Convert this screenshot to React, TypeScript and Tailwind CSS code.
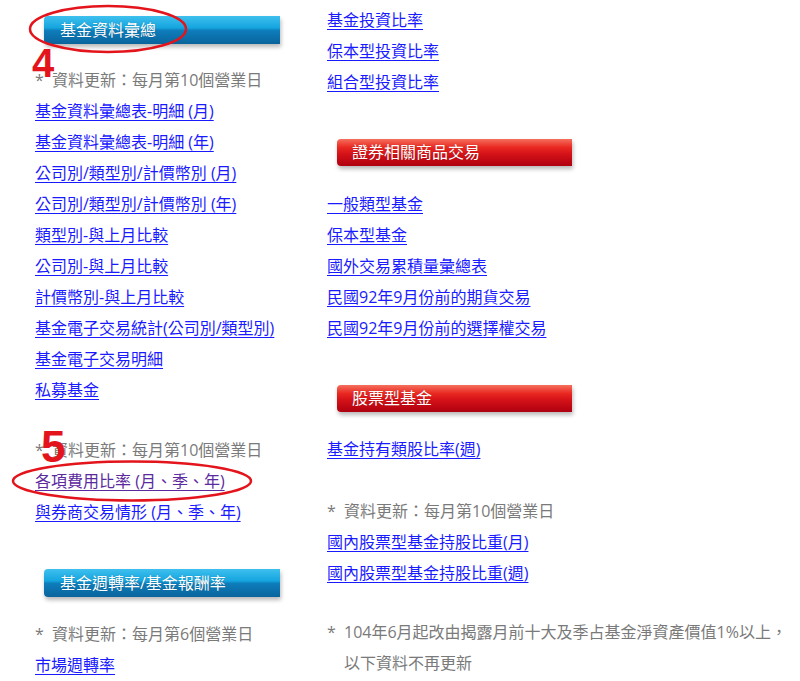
import React from "react";

const FONT = "font-['Open_Sans','Noto_Sans_CJK_TC',sans-serif]";

function Link({ text, visited }: { text: string; visited?: boolean }) {
  return (
    <div className="h-[31px] leading-[31px] whitespace-nowrap">
      <a
        href="#"
        className={
          (visited ? "text-[#5b2a9e] decoration-[#5b2a9e]" : "text-[#1a1aff] decoration-[#1a1aff]") +
          " underline underline-offset-[3px]"
        }
      >
        {text}
      </a>
    </div>
  );
}

function Note({ text }: { text: string }) {
  return (
    <div className="h-[31px] leading-[31px] whitespace-nowrap text-[#7a7a7a] flex">
      <span className="w-[17px] inline-block">*</span>
      <span>{text}</span>
    </div>
  );
}

function BlueBar({ text, className }: { text: string; className?: string }) {
  return (
    <div
      className={
        "h-[28px] w-[236px] ml-[9px] rounded-l-[4px] bg-[linear-gradient(to_bottom,#3ec0ee_0%,#15a5df_42%,#0d7dbb_52%,#0a649c_100%)] shadow-[1px_3px_4px_rgba(0,0,0,0.28)] text-white text-[16px] leading-[28px] pl-[16px] whitespace-nowrap [text-shadow:0_0_1px_rgba(0,0,0,0.3)] " +
        (className ?? "")
      }
    >
      {text}
    </div>
  );
}

function RedBar({ text, className }: { text: string; className?: string }) {
  return (
    <div
      className={
        "h-[27px] w-[235px] ml-[10px] rounded-l-[4px] bg-[linear-gradient(to_bottom,#f5705e_0%,#ea2a22_30%,#d51218_55%,#ae0010_100%)] shadow-[1px_3px_4px_rgba(0,0,0,0.28)] text-white text-[16px] leading-[27px] pl-[15px] whitespace-nowrap [text-shadow:0_0_1px_rgba(0,0,0,0.3)] " +
        (className ?? "")
      }
    >
      {text}
    </div>
  );
}

export default function App() {
  return (
    <div className={"relative w-[800px] h-[681px] overflow-hidden bg-white text-[16px] " + FONT}>
      <div className="flex">
        {/* Left column */}
        <div className="ml-[35px] w-[292px] shrink-0 flex flex-col">
          <BlueBar text="基金資料彙總" className="mt-[16px] mb-[21px]" />
          <Note text="資料更新：每月第10個營業日" />
          <Link text="基金資料彙總表-明細 (月)" />
          <Link text="基金資料彙總表-明細 (年)" />
          <Link text="公司別/類型別/計價幣別 (月)" />
          <Link text="公司別/類型別/計價幣別 (年)" />
          <Link text="類型別-與上月比較" />
          <Link text="公司別-與上月比較" />
          <Link text="計價幣別-與上月比較" />
          <Link text="基金電子交易統計(公司別/類型別)" />
          <Link text="基金電子交易明細" />
          <Link text="私募基金" />
          <div className="h-[29px]" />
          <Note text="資料更新：每月第10個營業日" />
          <Link text="各項費用比率 (月、季、年)" visited />
          <Link text="與券商交易情形 (月、季、年)" />
          <BlueBar text="基金週轉率/基金報酬率" className="mt-[41px] mb-[22px]" />
          <Note text="資料更新：每月第6個營業日" />
          <Link text="市場週轉率" />
        </div>

        {/* Right column */}
        <div className="w-[473px] shrink-0 flex flex-col pt-[5px]">
          <Link text="基金投資比率" />
          <Link text="保本型投資比率" />
          <Link text="組合型投資比率" />
          <RedBar text="證券相關商品交易" className="mt-[41px] mb-[23px]" />
          <Link text="一般類型基金" />
          <Link text="保本型基金" />
          <Link text="國外交易累積量彙總表" />
          <Link text="民國92年9月份前的期貨交易" />
          <Link text="民國92年9月份前的選擇權交易" />
          <RedBar text="股票型基金" className="mt-[41px] mb-[22px]" />
          <Link text="基金持有類股比率(週)" />
          <div className="h-[31px]" />
          <Note text="資料更新：每月第10個營業日" />
          <Link text="國內股票型基金持股比重(月)" />
          <Link text="國內股票型基金持股比重(週)" />
          <div className="h-[28px]" />
          <Note text="104年6月起改由揭露月前十大及季占基金淨資產價值1%以上，" />
          <div className="h-[31px] leading-[31px] whitespace-nowrap text-[#7a7a7a] pl-[17px]">
            以下資料不再更新
          </div>
        </div>
      </div>

      {/* Annotations */}
      <svg className="absolute left-[28px] top-[3px]" width="162" height="52" viewBox="0 0 162 52">
        <ellipse cx="80" cy="26" rx="78" ry="23" fill="none" stroke="#e3141b" strokeWidth="2.5" />
      </svg>
      <div className="absolute left-[32px] top-[43px] text-[40px] leading-none font-bold text-[#e3141b] font-['Liberation_Sans',sans-serif]">
        4
      </div>
      <svg className="absolute left-[11px] top-[459px]" width="244" height="44" viewBox="0 0 244 44">
        <ellipse cx="121" cy="22" rx="119" ry="19.5" fill="none" stroke="#e3141b" strokeWidth="2.5" />
      </svg>
      <div className="absolute left-[41px] top-[425px] text-[44px] leading-none font-bold text-[#e3141b] font-['Liberation_Sans',sans-serif]">
        5
      </div>
    </div>
  );
}
